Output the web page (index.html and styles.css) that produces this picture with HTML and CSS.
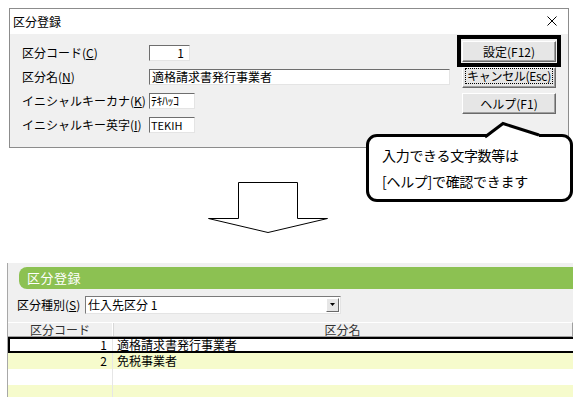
FILE: index.html
```html
<!DOCTYPE html>
<html lang="ja">
<head>
<meta charset="utf-8">
<link rel="stylesheet" href="styles.css">
</head>
<body>
<div class="dialog">
  <div class="titlebar">
    <span class="title">区分登録</span>
    <svg class="close" width="10" height="10" viewBox="0 0 10 10"><path d="M0.5 0.5 L9.5 9.5 M9.5 0.5 L0.5 9.5" stroke="#000" stroke-width="1" fill="none"/></svg>
  </div>
  <div class="dlg-body">
    <div class="form">
      <div class="row"><label class="lbl">区分コード(<u>C</u>)</label><div class="field f-code">1</div></div>
      <div class="row"><label class="lbl">区分名(<u>N</u>)</label><div class="field f-name">適格請求書発行事業者</div></div>
      <div class="row"><label class="lbl">イニシャルキーカナ(<u>K</u>)</label><div class="field f-short kana">ﾃｷﾊｯｺ</div></div>
      <div class="row"><label class="lbl">イニシャルキー英字(<u>I</u>)</label><div class="field f-short">TEKIH</div></div>
    </div>
    <div class="buttons">
      <div class="btn">設定(F12)</div>
      <div class="btn btn-focus"><span class="focus">キャンセル(Esc)</span></div>
      <div class="btn">ヘルプ(F1)</div>
    </div>
  </div>
</div>

<div class="highlight"></div>

<div class="callout">
  <p>入力できる文字数等は</p>
  <p>[ヘルプ]で確認できます</p>
</div>
<svg class="pointer" width="70" height="24" viewBox="480 118 70 24">
  <polygon points="485,139 503,123.5 539,135.5 539,139" fill="#fff"/>
  <polyline points="485,137 503,123.5 539,135" fill="none" stroke="#000" stroke-width="3" stroke-linejoin="miter"/>
</svg>

<svg class="arrow" width="122" height="54" viewBox="208 181 122 54">
  <polygon points="238.5,182.5 297.5,182.5 297.5,218.5 327.5,218.5 268,232.5 208.5,218.5 238.5,218.5" fill="#fff" stroke="#000" stroke-width="1"/>
</svg>

<div class="panel">
  <div class="panel-title">区分登録</div>
  <div class="kind-row">
    <span class="kind-lbl">区分種別(<u>S</u>)</span>
    <div class="combo">
      <span class="combo-text">仕入先区分 1</span>
      <span class="combo-btn"><svg width="5" height="3" viewBox="0 0 5 3"><polygon points="0,0 5,0 2.5,3" fill="#000"/></svg></span>
    </div>
  </div>
  <div class="grid">
    <div class="grow ghead"><div class="c-code">区分コード</div><div class="c-name">区分名</div></div>
    <div class="grow sel"><div class="c-code num">1</div><div class="c-name">適格請求書発行事業者</div></div>
    <div class="grow alt"><div class="c-code num">2</div><div class="c-name">免税事業者</div></div>
    <div class="grow"><div class="c-code"></div><div class="c-name"></div></div>
    <div class="grow alt"><div class="c-code"></div><div class="c-name"></div></div>
  </div>
</div>
</body>
</html>
```

FILE: styles.css
```css
* { box-sizing: border-box; }
html, body { margin: 0; padding: 0; background: #fff; }
body {
  width: 584px;
  height: 411px;
  overflow: hidden;
  position: relative;
  font-family: "Noto Sans CJK JP", "Noto Sans", sans-serif;
  font-size: 12px;
  color: #000;
}
u { text-decoration: underline; text-underline-offset: 1px; }

/* dialog */
.dialog {
  margin: 8px 0 0 9px;
  width: 560px;
  height: 140px;
  border: 1px solid #8c8c8c;
  display: flex;
  flex-direction: column;
}
.titlebar {
  height: 25px;
  background: #fff;
  display: flex;
  align-items: center;
  justify-content: space-between;
  padding: 0 11px 0 3px;
}
.title { font-size: 12px; line-height: 14px; }
.close { margin-top: -2px; }
.dlg-body {
  flex: 1;
  background: #f0f0f0;
  display: flex;
  padding: 7px 0 0 12px;
}
.form { display: flex; flex-direction: column; width: 428px; }
.row { height: 24px; display: flex; align-items: center; }
.lbl { width: 127px; line-height: 14px; white-space: nowrap; letter-spacing: 0; }
.field {
  height: 16px;
  background: #fff;
  border-style: solid;
  border-width: 1px;
  border-color: #6e6e6e #e4e4e4 #e4e4e4 #6e6e6e;
  line-height: 14px;
  padding: 0 2px;
  white-space: nowrap;
  overflow: hidden;
}
.f-code { width: 41px; text-align: right; padding-right: 5px; }
.f-name { width: 301px; }
.f-short { width: 46px; font-size: 11px; padding-left: 1px; }
.kana { font-size: 12px; letter-spacing: -0.5px; }

.buttons {
  display: flex;
  flex-direction: column;
  gap: 5px;
  margin-left: 12px;
  padding-top: 0px;
}
.btn {
  width: 94px;
  height: 21px;
  background: #e6e6e6;
  border-style: solid;
  border-width: 1px;
  border-color: #fff #6a6a6a #6a6a6a #fff;
  box-shadow: inset -1px -1px 0 #a0a0a0;
  display: flex;
  align-items: center;
  justify-content: center;
  line-height: 14px;
  white-space: nowrap;
}
.btn-focus { align-items: flex-start; padding-top: 1px; }
.focus { outline: 1px dotted #000; outline-offset: 0; padding: 0 1px; letter-spacing: -0.3px; }

.highlight {
  position: absolute;
  left: 457px;
  top: 35px;
  width: 104px;
  height: 32px;
  border: 4px solid #000;
}

/* callout */
.callout {
  position: absolute;
  left: 366px;
  top: 134px;
  width: 207px;
  height: 68px;
  background: #fff;
  border: 3px solid #000;
  border-radius: 11px;
  padding: 8px 0 0 13px;
  font-size: 14px;
}
.callout p { margin: 0; height: 26px; line-height: 20px; white-space: nowrap; letter-spacing: -0.3px; }
.pointer { position: absolute; left: 480px; top: 118px; }
.arrow { position: absolute; left: 208px; top: 181px; }

/* bottom panel */
.panel {
  margin: 115px 0 0 7px;
  width: 566px;
  height: 134px;
  background: #f0f0f0;
  border-left: 1px solid #a8a8a8;
  padding-top: 4px;
  overflow: hidden;
  display: flex;
  flex-direction: column;
}
.panel-title {
  margin-left: 11px;
  height: 22px;
  background: #8cc152;
  border-radius: 8px 0 0 8px;
  color: #fff;
  font-size: 13px;
  line-height: 22px;
  padding-left: 8px;
  letter-spacing: 0.5px;
}
.kind-row {
  display: flex;
  align-items: center;
  margin-top: 7px;
  height: 17px;
  padding-left: 9px;
}
.kind-lbl { width: 68px; line-height: 14px; white-space: nowrap; }
.combo {
  width: 256px;
  height: 18px;
  background: #fff;
  border-style: solid;
  border-width: 1px;
  border-color: #7a7a7a #e4e4e4 #e4e4e4 #7a7a7a;
  display: flex;
  align-items: center;
  justify-content: space-between;
}
.combo-text { padding-left: 2px; line-height: 14px; font-size: 12px; }
.combo-btn {
  width: 13px;
  height: 14px;
  margin-right: 1px;
  background: #e6e6e6;
  border-style: solid;
  border-width: 1px;
  border-color: #fff #6a6a6a #6a6a6a #fff;
  display: flex;
  align-items: center;
  justify-content: center;
}
.grid { margin-top: 9px; display: flex; flex-direction: column; }
.grow { display: flex; height: 16px; background: #fff; }
.grow.alt { background: #f6fbcc; }
.c-code { width: 105px; border-right: 1px solid #e6e6e6; line-height: 15px; white-space: nowrap; }
.c-name { flex: 1; padding-left: 4px; line-height: 15px; white-space: nowrap; }
.num { text-align: right; padding-right: 5px; }
.ghead {
  height: 15px;
  background: #f0f0f0;
  border-top: 1px solid #fff;
  border-bottom: 1px solid #a0a0a0;
  border-right: 1px solid #a0a0a0;
}
.ghead .c-code { text-align: center; border-right: 1px solid #fff; box-shadow: 1px 0 0 #d8d8d8; line-height: 13px; color: #333; }
.ghead .c-name { text-align: center; padding-left: 0; line-height: 13px; color: #333; }
.grow.sel { border-top: 2px solid #000; border-bottom: 2px solid #000; border-left: 2px solid #000; }
.grow.sel .c-code { width: 103px; line-height: 12px; }
.grow.sel .c-name { line-height: 12px; }
```
